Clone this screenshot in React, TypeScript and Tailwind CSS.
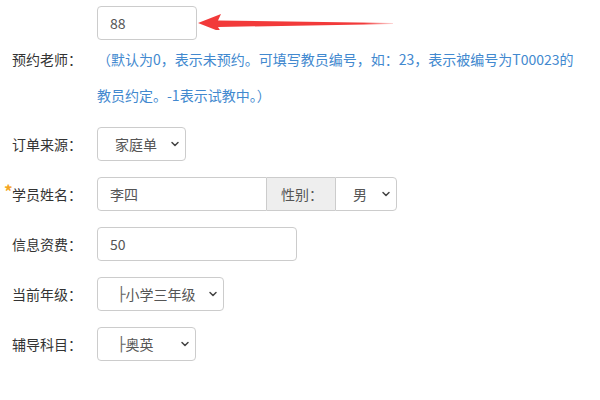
import { ChevronDown } from "lucide-react";

const font = { fontFamily: '"Microsoft YaHei", "Noto Sans CJK SC", "Liberation Sans", sans-serif' };

function Label({ text, required }: { text: string; required?: boolean }) {
  return (
    <div className="relative w-[97px] shrink-0 pl-3 text-[14px] text-[#333]">
      {required && <span className="absolute left-[4px] -top-[2px] text-[17px] font-bold leading-none text-[#f5a623]">*</span>}
      {text}
    </div>
  );
}

function Select({ value, tree, width, radius = "rounded" }: { value: string; tree?: boolean; width: string; radius?: string }) {
  return (
    <div className={`flex h-[34px] items-center justify-between border border-[#ccc] bg-white pl-[17px] pr-[4px] text-[14px] text-[#555] ${width} ${radius}`}>
      <span className="flex items-center">
        {tree && <span className="ml-[2px] text-[#666]" style={{ fontFamily: '"DejaVu Sans", sans-serif' }}>├</span>}
        {value}
      </span>
      <ChevronDown className="h-[12px] w-[12px] text-[#444]" strokeWidth={3} />
    </div>
  );
}

export default function App() {
  return (
    <div className="h-[400px] w-[600px] bg-white" style={font}>
      {/* 预约老师 */}
      <div className="flex items-center pt-[6px]">
        <Label text="预约老师：" />
        <div className="relative">
          <div className="flex h-[34px] w-[100px] items-center rounded border border-[#ccc] pl-3 text-[14px] text-[#555]">88</div>
          <svg className="absolute left-[100px] top-[4px]" width="200" height="20" viewBox="0 0 200 20">
            <defs>
              <linearGradient id="tail" x1="0" x2="1" y1="0" y2="0">
                <stop offset="0" stopColor="#f23a3a" />
                <stop offset="0.85" stopColor="#f23a3a" />
                <stop offset="1" stopColor="#f23a3a" stopOpacity="0.2" />
              </linearGradient>
            </defs>
            <polygon points="1,13 24,4 21,10.5 196,13 196,14 21,17 24,22" fill="url(#tail)" />
          </svg>
          <div className="mt-[1px] text-[14px] leading-[36px] text-[#4289cf]">
            （默认为0，表示未预约。可填写教员编号，如：23，表示被编号为T00023的
            <br />
            教员约定。-1表示试教中。）
          </div>
        </div>
      </div>

      <div className="mt-[14px] flex flex-col gap-4">
        <div className="flex items-center">
          <Label text="订单来源：" />
          <Select value="家庭单" width="w-[89px]" />
        </div>

        <div className="flex items-center">
          <Label text="学员姓名：" required />
          <div className="flex">
            <div className="flex h-[34px] w-[170px] items-center rounded-l border border-[#ccc] pl-3 text-[14px] text-[#555]">李四</div>
            <div className="flex h-[34px] w-[68px] items-center border-y border-[#ccc] bg-[#eee] pl-[14px] text-[14px] text-[#555]">性别：</div>
            <Select value="男" width="w-[62px]" radius="rounded-r" />
          </div>
        </div>

        <div className="flex items-center">
          <Label text="信息资费：" />
          <div className="flex h-[34px] w-[200px] items-center rounded border border-[#ccc] pl-3 text-[14px] text-[#555]">50</div>
        </div>

        <div className="flex items-center">
          <Label text="当前年级：" />
          <Select value="小学三年级" tree width="w-[127px]" />
        </div>

        <div className="flex items-center">
          <Label text="辅导科目：" />
          <Select value="奥英" tree width="w-[99px]" />
        </div>
      </div>
    </div>
  );
}
